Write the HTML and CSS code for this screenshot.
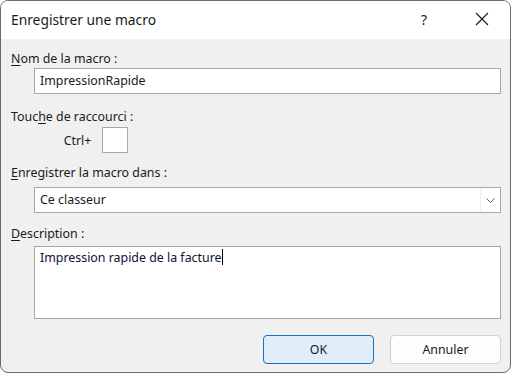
FILE: index.html
```html
<!DOCTYPE html>
<html lang="fr">
<head>
    <meta charset="UTF-8">
    <title>Enregistrer une macro</title>
    <link rel="stylesheet" href="styles.css">
</head>
<body>
    <div class="window">
        <div class="titlebar">
            <span class="title">Enregistrer une macro</span>
            <span class="help">?</span>
            <svg class="close" width="14" height="14" viewBox="0 0 14 14">
                <path d="M1 1 L13 13 M13 1 L1 13" stroke="#1a1a1a" stroke-width="1.1" fill="none"/>
            </svg>
        </div>

        <div class="content">
            <div class="label label-name"><u>N</u>om de la macro :</div>
            <div class="field field-name">ImpressionRapide</div>

            <div class="label label-key">Touc<u>h</u>e de raccourci :</div>
            <div class="shortcut">
                <span class="ctrl">Ctrl+</span>
                <div class="keybox"></div>
            </div>

            <div class="label label-store"><u>E</u>nregistrer la macro dans :</div>
            <div class="field select">
                <span>Ce classeur</span>
                <div class="arrow">
                    <svg width="9" height="5" viewBox="0 0 9 5">
                        <path d="M0.5 0.5 L4.5 4.5 L8.5 0.5" stroke="#606060" stroke-width="1" fill="none"/>
                    </svg>
                </div>
            </div>

            <div class="label label-desc"><u>D</u>escription :</div>
            <div class="field textarea">Impression rapide de la facture<span class="caret"></span></div>

            <div class="buttons">
                <button class="btn btn-ok">OK</button>
                <button class="btn">Annuler</button>
            </div>
        </div>
    </div>
</body>
</html>
```

FILE: styles.css
```css
* {
    margin: 0;
    padding: 0;
    box-sizing: border-box;
    font-family: "Noto Sans", "Open Sans", sans-serif;
}

body {
    background: #ffffff;
}

.window {
    width: 511px;
    height: 373px;
    border: 1px solid #6a6a6a;
    border-radius: 8px;
    overflow: hidden;
    background: #f0f0f0;
    display: flex;
    flex-direction: column;
}

.titlebar {
    height: 38px;
    background: #ffffff;
    display: flex;
    align-items: center;
    padding-left: 10px;
    flex-shrink: 0;
}

.title {
    font-size: 13.8px;
    color: #1a1a1a;
    flex: 1;
    padding-bottom: 2px;
}

.help {
    font-size: 14px;
    color: #1a1a1a;
    margin-right: 48px;
    padding-bottom: 2px;
}

.close {
    margin-right: 21px;
    margin-bottom: 2px;
}

.content {
    padding: 12px 9px 0 10px;
    display: flex;
    flex-direction: column;
    font-size: 12.4px;
    color: #1a1a1a;
}

.label {
    height: 16px;
    line-height: 16px;
}

.label u {
    text-decoration-thickness: 1px;
    text-underline-offset: 2px;
}

.field {
    margin-left: 23px;
    height: 26px;
    background: #ffffff;
    border: 1px solid #a8a8a8;
    padding-left: 5px;
    line-height: 24px;
}

.field-name {
    margin-top: 1px;
}

.label-key {
    margin-top: 15px;
}

.shortcut {
    display: flex;
    align-items: center;
    margin-top: 2px;
    padding-left: 48px;
}

.ctrl {
    width: 37px;
    text-align: center;
    margin-right: 6px;
}

.keybox {
    width: 26px;
    height: 26px;
    background: #ffffff;
    border: 1px solid #a8a8a8;
}

.label-store {
    margin-top: 12px;
}

.select {
    margin-top: 6px;
    display: flex;
    justify-content: space-between;
    padding-right: 0;
}

.arrow {
    width: 20px;
    height: 24px;
    border-left: 1px solid #f0f0f0;
    display: flex;
    align-items: center;
    justify-content: center;
}

.label-desc {
    margin-top: 13px;
}

.textarea {
    margin-top: 4px;
    height: 73px;
    line-height: 22px;
    color: #101030;
}

.caret {
    display: inline-block;
    width: 1px;
    height: 16px;
    background: #000000;
    vertical-align: -3px;
}

.buttons {
    display: flex;
    justify-content: flex-end;
    gap: 16px;
    margin-top: 16px;
}

.btn {
    width: 111px;
    height: 29px;
    font-size: 12.4px;
    color: #1a1a1a;
    background: #fdfdfd;
    border: 1px solid #d0d0d0;
    border-radius: 4px;
}

.btn-ok {
    background: #e0eefa;
    border: 1px solid #1a6fc8;
}
```
